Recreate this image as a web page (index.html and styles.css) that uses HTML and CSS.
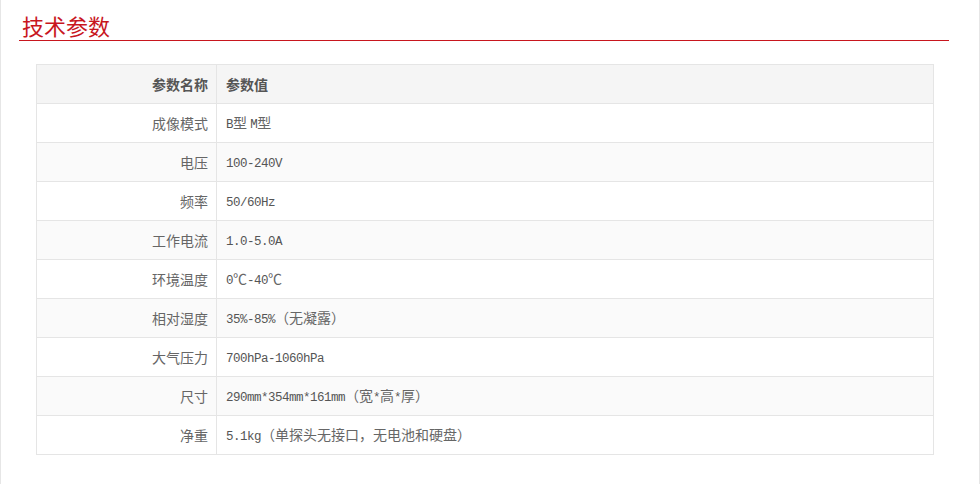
FILE: index.html
```html
<!DOCTYPE html>
<html lang="zh-CN">
<head>
<meta charset="utf-8">
<title>技术参数</title>
<link rel="stylesheet" href="styles.css">
</head>
<body>
<div class="page">
  <h2 class="title">技术参数</h2>
  <table class="spec">
    <thead>
      <tr><th class="k">参数名称</th><th class="v">参数值</th></tr>
    </thead>
    <tbody>
      <tr><td class="k">成像模式</td><td class="v"><span class="en">B</span>型 <span class="en">M</span>型</td></tr>
      <tr><td class="k">电压</td><td class="v"><span class="en">100-240V</span></td></tr>
      <tr><td class="k">频率</td><td class="v"><span class="en">50/60Hz</span></td></tr>
      <tr><td class="k">工作电流</td><td class="v"><span class="en">1.0-5.0A</span></td></tr>
      <tr><td class="k">环境温度</td><td class="v"><span class="en">0</span>℃<span class="en">-40</span>℃</td></tr>
      <tr><td class="k">相对湿度</td><td class="v"><span class="en">35%-85%</span>（无凝露）</td></tr>
      <tr><td class="k">大气压力</td><td class="v"><span class="en">700hPa-1060hPa</span></td></tr>
      <tr><td class="k">尺寸</td><td class="v"><span class="en">290mm*354mm*161mm</span>（宽<span class="en">*</span>高<span class="en">*</span>厚）</td></tr>
      <tr><td class="k">净重</td><td class="v"><span class="en">5.1kg</span>（单探头无接口，无电池和硬盘）</td></tr>
    </tbody>
  </table>
</div>
</body>
</html>
```

FILE: styles.css
```css
html, body {
  margin: 0;
  padding: 0;
  background: #fff;
}
.page {
  width: 978px;
  height: 484px;
  border-left: 1px solid #e6e6e6;
  border-right: 1px solid #e6e6e6;
  font-family: "Noto Sans CJK SC", "Noto Sans", sans-serif;
  color: #666;
  overflow: hidden;
}
.title {
  margin: 0 30px 0 18px;
  padding: 10px 0 0 3px;
  height: 30px;
  line-height: 30px;
  font-size: 22px;
  font-weight: normal;
  color: #c8161e;
  border-bottom: 1px solid #c8161e;
}
.spec {
  margin: 23px 0 0 35px;
  width: 898px;
  table-layout: fixed;
  border-collapse: separate;
  border-spacing: 0;
  border-top: 1px solid #e5e5e5;
  border-left: 1px solid #e5e5e5;
}
.spec th, .spec td {
  box-sizing: border-box;
  padding: 0;
  height: 39px;
  line-height: 20px;
  font-size: 14px;
  vertical-align: middle;
  border-right: 1px solid #e5e5e5;
  border-bottom: 1px solid #e5e5e5;
  white-space: nowrap;
}
.spec thead th {
  background: #f5f5f5;
  color: #555;
  font-weight: bold;
}
.spec .k {
  width: 180px;
  text-align: right;
  padding-right: 8px;
}
.spec .v {
  text-align: left;
  padding-left: 9px;
}
.spec tbody tr:nth-child(even) td {
  background: #fafafa;
}
.spec .en {
  font-family: "Liberation Mono", monospace;
  font-size: 12.5px;
  letter-spacing: -0.5px;
  color: #555;
}
```
